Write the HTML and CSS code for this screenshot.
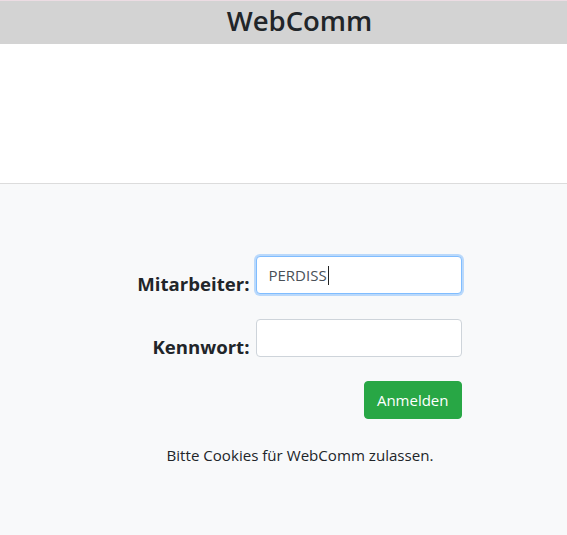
FILE: index.html
```html
<!DOCTYPE html>
<html lang="de">
<head>
<meta charset="utf-8">
<title>WebComm</title>
<link rel="stylesheet" href="styles.css">
</head>
<body>
<header class="topbar">
  <h1 class="brand">WebComm</h1>
</header>
<div class="spacer"></div>
<main class="login">
  <form class="login-form">
    <div class="row">
      <label class="label" for="user">Mitarbeiter:</label>
      <div class="field focused" id="user">PERDISS<span class="caret"></span></div>
    </div>
    <div class="row">
      <label class="label" for="pw">Kennwort:</label>
      <input class="field" id="pw" type="password">
    </div>
    <div class="actions">
      <button class="btn" type="button">Anmelden</button>
    </div>
  </form>
  <p class="note">Bitte Cookies für WebComm zulassen.</p>
</main>
</body>
</html>
```
FILE: styles.css
```css
html, body {
  margin: 0;
  padding: 0;
  height: 100%;
}
body {
  font-family: "Open Sans", "Noto Sans", sans-serif;
  color: #212529;
  background: #f8f9fa;
  display: flex;
  flex-direction: column;
}
.topbar {
  background: #d3d3d3;
  border-top: 1px solid #ecdce3;
  height: 44px;
  display: flex;
  justify-content: center;
  box-sizing: border-box;
}
.brand {
  margin: 4px 0 0 32px;
  font-size: 27.5px;
  font-weight: 600;
  line-height: 32px;
  color: #212529;
}
.spacer {
  background: #fff;
  height: 139px;
  border-bottom: 1px solid #dcdcdc;
}
.login {
  flex: 1;
  display: flex;
  flex-direction: column;
  align-items: center;
  padding-top: 72px;
}
.login-form {
  display: flex;
  flex-direction: column;
  gap: 25px;
  margin-left: 14px;
}
.row {
  display: grid;
  grid-template-columns: 130px 206px;
  column-gap: 6px;
  align-items: end;
}
.label {
  text-align: right;
  font-weight: 700;
  font-size: 18.6px;
  line-height: 1;
  padding-bottom: 0;
}
.field {
  box-sizing: border-box;
  width: 206px;
  height: 38px;
  border: 1px solid #ced4da;
  border-radius: 4px;
  background: #fff;
  font: 15px "Open Sans", sans-serif;
  color: #495057;
  padding: 0 12px;
  display: flex;
  align-items: center;
  margin: 0;
}
.field.focused {
  border-color: #80bdff;
  box-shadow: 0 0 0 2px rgba(0, 123, 255, 0.25);
}
.caret {
  display: inline-block;
  width: 1px;
  height: 19px;
  background: #222;
  margin-left: 1px;
}
.actions {
  display: flex;
  justify-content: flex-end;
  margin-top: -1px;
}
.btn {
  background: #28a745;
  border: 1px solid #28a745;
  color: #fff;
  border-radius: 4px;
  height: 38px;
  padding: 0 12px;
  font: 15px "Open Sans", sans-serif;
}
.note {
  margin: 26px 0 0 33px;
  font-size: 15.1px;
}
```
